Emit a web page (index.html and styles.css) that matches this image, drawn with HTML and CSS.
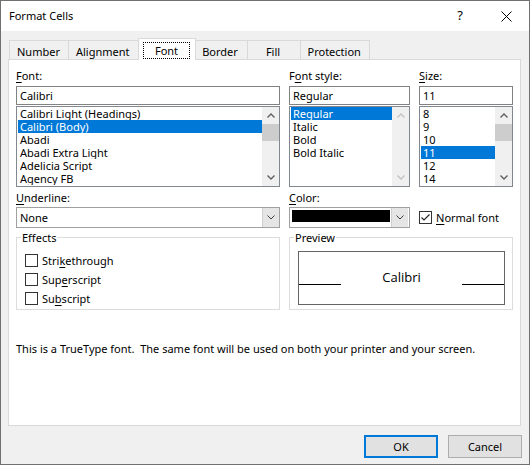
FILE: index.html
```html
<!DOCTYPE html>
<html>
<head>
<meta charset="utf-8">
<title>Format Cells</title>
<link rel="stylesheet" href="styles.css">
</head>
<body>
<div class="dialog">
  <div class="titlebar">
    <span class="title">Format Cells</span>
    <span class="tb-btn help">?</span>
    <span class="tb-btn"><svg width="11" height="11" viewBox="0 0 11 11"><path d="M0.5 0.5L10.5 10.5M10.5 0.5L0.5 10.5" stroke="#000" stroke-width="1" fill="none"/></svg></span>
  </div>
  <div class="body">
    <div class="tabs">
      <div class="tab">Number</div>
      <div class="tab">Alignment</div>
      <div class="tab active"><span class="focus">Font</span></div>
      <div class="tab">Border</div>
      <div class="tab">Fill</div>
      <div class="tab">Protection</div>
    </div>
    <div class="panel">
      <div class="grid">
        <div class="lbl"><u>F</u>ont:</div>
        <div class="lbl">F<u>o</u>nt style:</div>
        <div class="lbl"><u>S</u>ize:</div>

        <div class="input">Calibri</div>
        <div class="input">Regular</div>
        <div class="input">11</div>

        <div class="list">
          <div class="items">
            <div class="item">Calibri Light (Headings)</div>
            <div class="item sel">Calibri (Body)</div>
            <div class="item">Abadi</div>
            <div class="item">Abadi Extra Light</div>
            <div class="item">Adelicia Script</div>
            <div class="item">Agency FB</div>
          </div>
          <div class="sb">
            <div class="sb-btn"><svg width="8" height="5" viewBox="0 0 8 5"><path d="M0.5 4.5L4 1L7.5 4.5" fill="none" stroke="#606060" stroke-width="1.4"/></svg></div>
            <div class="sb-track"><div class="thumb"></div></div>
            <div class="sb-btn"><svg width="8" height="5" viewBox="0 0 8 5"><path d="M0.5 0.5L4 4L7.5 0.5" fill="none" stroke="#606060" stroke-width="1.4"/></svg></div>
          </div>
        </div>
        <div class="list">
          <div class="items">
            <div class="item sel">Regular</div>
            <div class="item">Italic</div>
            <div class="item">Bold</div>
            <div class="item">Bold Italic</div>
          </div>
          <div class="sb">
            <div class="sb-btn"><svg width="8" height="5" viewBox="0 0 8 5"><path d="M0.5 4.5L4 1L7.5 4.5" fill="none" stroke="#c2c2c2" stroke-width="1.4"/></svg></div>
            <div class="sb-track"></div>
            <div class="sb-btn"><svg width="8" height="5" viewBox="0 0 8 5"><path d="M0.5 0.5L4 4L7.5 0.5" fill="none" stroke="#c2c2c2" stroke-width="1.4"/></svg></div>
          </div>
        </div>
        <div class="list">
          <div class="items">
            <div class="item">8</div>
            <div class="item">9</div>
            <div class="item">10</div>
            <div class="item sel">11</div>
            <div class="item">12</div>
            <div class="item">14</div>
          </div>
          <div class="sb">
            <div class="sb-btn"><svg width="8" height="5" viewBox="0 0 8 5"><path d="M0.5 4.5L4 1L7.5 4.5" fill="none" stroke="#606060" stroke-width="1.4"/></svg></div>
            <div class="sb-track"><div class="thumb"></div></div>
            <div class="sb-btn"><svg width="8" height="5" viewBox="0 0 8 5"><path d="M0.5 0.5L4 4L7.5 0.5" fill="none" stroke="#606060" stroke-width="1.4"/></svg></div>
          </div>
        </div>

        <div class="lbl mt"><u>U</u>nderline:</div>
        <div class="lbl mt"><u>C</u>olor:</div>
        <div class="lbl mt"></div>

        <div class="combo">
          <div class="combo-text">None</div>
          <div class="combo-btn"><svg width="8" height="5" viewBox="0 0 8 5"><path d="M0.5 0.5L4 4L7.5 0.5" fill="none" stroke="#404040" stroke-width="1"/></svg></div>
        </div>
        <div class="combo">
          <div class="swatch"></div>
          <div class="combo-btn"><svg width="8" height="5" viewBox="0 0 8 5"><path d="M0.5 0.5L4 4L7.5 0.5" fill="none" stroke="#404040" stroke-width="1"/></svg></div>
        </div>
        <div class="check-line">
          <span class="cbox"><svg width="11" height="11" viewBox="0 0 11 11"><path d="M1.5 5.5L4 8L9.5 2.5" fill="none" stroke="#222" stroke-width="1.1"/></svg></span>
          <span><u>N</u>ormal font</span>
        </div>

        <fieldset class="group">
          <legend>Effects</legend>
          <div class="cb-row"><span class="cbox"></span><span>Stri<u>k</u>ethrough</span></div>
          <div class="cb-row"><span class="cbox"></span><span>Sup<u>e</u>rscript</span></div>
          <div class="cb-row"><span class="cbox"></span><span>Su<u>b</u>script</span></div>
        </fieldset>
        <fieldset class="group preview">
          <legend>Preview</legend>
          <div class="pv-box">
            <div class="pv-row">
              <span class="pv-line"></span>
              <span class="pv-text">Calibri</span>
              <span class="pv-line"></span>
            </div>
          </div>
        </fieldset>
      </div>
      <p class="note">This is a TrueType font.&nbsp; The same font will be used on both your printer and your screen.</p>
    </div>
    <div class="buttons">
      <button class="btn default">OK</button>
      <button class="btn">Cancel</button>
    </div>
  </div>
</div>
</body>
</html>
```

FILE: styles.css
```css
* { box-sizing: border-box; }
html, body { margin: 0; padding: 0; }
body {
  width: 530px;
  height: 465px;
  overflow: hidden;
  background: #ffffff;
  font-family: "Segoe UI", "Noto Sans", sans-serif;
  font-size: 11px;
  line-height: 15px;
  color: #000;
}
u { text-decoration-thickness: 1px; text-underline-offset: 2px; }

.dialog {
  width: 530px;
  height: 465px;
  border: 1px solid #707070;
  background: #f0f0f0;
  display: flex;
  flex-direction: column;
}

.titlebar {
  flex: none;
  height: 30px;
  background: #fff;
  display: flex;
  align-items: flex-start;
  padding-left: 8px;
}
.title { flex: 1; padding-top: 7px; }
.tb-btn {
  width: 46px;
  height: 30px;
  display: flex;
  align-items: center;
  justify-content: center;
}
.help { font-size: 13px; padding-bottom: 1px; }

.body { flex: 1; padding-top: 7px; display: flex; flex-direction: column; }

.tabs {
  display: flex;
  align-items: flex-end;
  height: 21px;
  margin-left: 8px;
}
.tab {
  height: 19px;
  min-width: 54px;
  padding: 3px 8px 0 7px;
  border: 1px solid #d9d9d9;
  border-bottom: none;
  background: #f0f0f0;
  text-align: center;
  white-space: nowrap;
  margin-left: -1px;
}
.tab:first-child { margin-left: 0; }
.tab.active {
  height: 22px;
  min-width: 58px;
  margin: 0 -1px -1px -1px;
  padding: 3px 4px 0;
  background: #fff;
  position: relative;
  z-index: 1;
}
.focus {
  display: inline-block;
  border: 1px dotted #000;
  padding: 0 11px;
  line-height: 15px;
}

.panel {
  margin-left: 7px;
  width: 513px;
  height: 367px;
  border: 1px solid #d9d9d9;
  background: #fff;
  padding: 8px 6px 0 7px;
}

.grid {
  display: grid;
  grid-template-columns: 264px 121px 94px;
  column-gap: 9px;
}
.lbl { height: 15px; white-space: nowrap; }
.lbl.mt { margin-top: 3px; }

.input {
  margin-top: 3px;
  height: 19px;
  border: 1px solid #828282;
  padding: 1px 0 0 3px;
  background: #fff;
}

.list {
  margin-top: 1px;
  height: 81px;
  border: 1px solid #828790;
  display: flex;
  background: #fff;
}
.items { flex: 1; padding-left: 1px; min-width: 0; }
.item {
  height: 13px;
  line-height: 13px;
  padding-left: 2px;
  white-space: nowrap;
  overflow: hidden;
}
.item.sel { background: #0078d7; color: #fff; }

.sb {
  width: 17px;
  flex: none;
  background: #f0f0f0;
  display: flex;
  flex-direction: column;
}
.sb-btn {
  height: 17px;
  display: flex;
  align-items: center;
  justify-content: center;
}
.sb-btn svg { display: block; }
.sb-track { flex: 1; }
.thumb { height: 17px; background: #cdcdcd; }

.combo {
  margin-top: 2px;
  height: 21px;
  border: 1px solid #a0a0a0;
  display: flex;
  background: #fff;
}
.combo-text { flex: 1; padding: 2px 0 0 3px; }
.combo-btn {
  width: 17px;
  flex: none;
  background: #e5e5e5;
  border-left: 1px solid #cfcfcf;
  display: flex;
  align-items: center;
  justify-content: center;
}
.swatch {
  width: 98px;
  height: 12px;
  margin: 2px 1px 0 2px;
  background: #000;
}

.check-line {
  margin-top: 2px;
  height: 21px;
  display: flex;
  align-items: center;
  white-space: nowrap;
}
.cbox {
  width: 13px;
  height: 13px;
  flex: none;
  border: 1px solid #333;
  background: #fff;
  margin-right: 4px;
  display: flex;
  align-items: center;
  justify-content: center;
}

.group {
  margin: 2px 0 0;
  padding: 6px 0 1px;
  min-width: 0;
  border: 1px solid #dcdcdc;
}
.group legend {
  padding: 0 1px;
  margin-left: 4px;
  line-height: 15px;
}
.preview { grid-column: 2 / 4; }

.cb-row {
  height: 19px;
  display: flex;
  align-items: center;
  padding-left: 8px;
  white-space: nowrap;
}

.pv-box {
  margin: 0 7px 0 8px;
  height: 54px;
  border: 1px solid #646464;
  padding-top: 18px;
}
.pv-row {
  display: flex;
  align-items: flex-start;
  justify-content: space-between;
}
.pv-line {
  width: 42px;
  height: 1px;
  margin-top: 14px;
  background: #000;
}
.pv-text {
  font-family: "Open Sans", "Noto Sans", sans-serif;
  font-size: 13px;
  line-height: 15px;
}

.note { margin: 31px 0 0; white-space: nowrap; }

.buttons {
  display: flex;
  justify-content: flex-end;
  gap: 10px;
  margin-top: 9px;
  padding-right: 7px;
}
.btn {
  width: 74px;
  height: 23px;
  border: 1px solid #adadad;
  background: #e1e1e1;
  font-family: inherit;
  font-size: 11px;
  color: #000;
  padding: 0;
  margin: 0;
}
.btn.default { border: 2px solid #0078d7; }
```
